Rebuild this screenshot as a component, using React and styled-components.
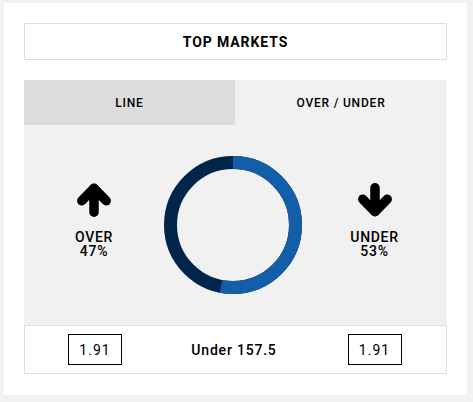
import React from "react";
import styled, { createGlobalStyle } from "styled-components";

const Global = createGlobalStyle`
  html, body { margin: 0; padding: 0; background: #f1f1f1; }
  body { font-family: Roboto, "Liberation Sans", sans-serif; color: #000; }
`;

const Card = styled.div`
  box-sizing: border-box;
  width: 463px;
  height: 392px;
  margin: 3px 0 0 4px;
  background: #fff;
  padding: 20px 20px 0 20px;
  display: flex;
  flex-direction: column;
`;

const Header = styled.div`
  box-sizing: border-box;
  height: 37px;
  border: 1px solid #dedede;
  display: flex;
  align-items: center;
  justify-content: center;
  font-size: 14px;
  font-weight: 700;
  letter-spacing: 0.9px;
`;

const Tabs = styled.div`
  margin-top: 20px;
  display: grid;
  grid-template-columns: 211px 1fr;
  height: 45px;
`;

const Tab = styled.div`
  display: flex;
  align-items: center;
  justify-content: center;
  background: ${(p) => (p.$active ? "#dcdcdc" : "#f1f1f1")};
  font-size: 12px;
  font-weight: 500;
  letter-spacing: 0.8px;
`;

const Body = styled.div`
  height: 200px;
  background: #f1f1f1;
  display: grid;
  grid-template-columns: 140px 138px 1fr;
  align-items: center;
`;

const Side = styled.div`
  display: flex;
  flex-direction: column;
  align-items: center;
  padding-bottom: 9px;
`;

const Label = styled.div`
  margin-top: 13px;
  text-align: center;
  font-size: 14px;
  font-weight: 500;
  line-height: 14.5px;
  letter-spacing: 0.7px;
`;

const Footer = styled.div`
  box-sizing: border-box;
  height: 49px;
  border: 1px solid #dedede;
  background: #fff;
  display: grid;
  grid-template-columns: 140px 138px 1fr;
  align-items: center;
`;

const Cell = styled.div`
  display: flex;
  justify-content: center;
  font-size: 14px;
  font-weight: 500;
  letter-spacing: 0.8px;
`;

const Odds = styled.div`
  box-sizing: border-box;
  width: 54px;
  height: 31px;
  border: 1px solid #000;
  display: flex;
  align-items: center;
  justify-content: center;
  font-size: 14px;
  font-weight: 400;
  letter-spacing: 1px;
`;

const Arrow = ({ down }) => (
  <svg width="34" height="34" viewBox="0 0 34 34">
    <g
      fill="none"
      stroke="#000"
      strokeWidth="9.5"
      strokeLinecap="round"
      strokeLinejoin="round"
      transform={down ? "rotate(180 17 17)" : undefined}
    >
      <path d="M17 29.2 V5.5" />
      <path d="M4.8 17.8 L17 5.3 L29.2 17.8" />
    </g>
  </svg>
);

const Donut = ({ pct }) => {
  const r = 62.5;
  const c = 2 * Math.PI * r;
  return (
    <svg width="138" height="138" viewBox="0 0 138 138">
      <g transform="rotate(-90 69 69)">
        <circle cx="69" cy="69" r={r} fill="none" stroke="#00254a" strokeWidth="13" />
        <circle
          cx="69"
          cy="69"
          r={r}
          fill="none"
          stroke="#135ea9"
          strokeWidth="13"
          strokeDasharray={`${c * pct} ${c}`}
        />
      </g>
    </svg>
  );
};

export default function App() {
  return (
    <>
      <Global />
      <Card>
        <Header>TOP MARKETS</Header>
        <Tabs>
          <Tab $active>LINE</Tab>
          <Tab>OVER / UNDER</Tab>
        </Tabs>
        <Body>
          <Side>
            <Arrow />
            <Label>
              OVER
              <br />
              47%
            </Label>
          </Side>
          <Donut pct={0.53} />
          <Side>
            <Arrow down />
            <Label>
              UNDER
              <br />
              53%
            </Label>
          </Side>
        </Body>
        <Footer>
          <Cell>
            <Odds>1.91</Odds>
          </Cell>
          <Cell>Under 157.5</Cell>
          <Cell>
            <Odds>1.91</Odds>
          </Cell>
        </Footer>
      </Card>
    </>
  );
}
